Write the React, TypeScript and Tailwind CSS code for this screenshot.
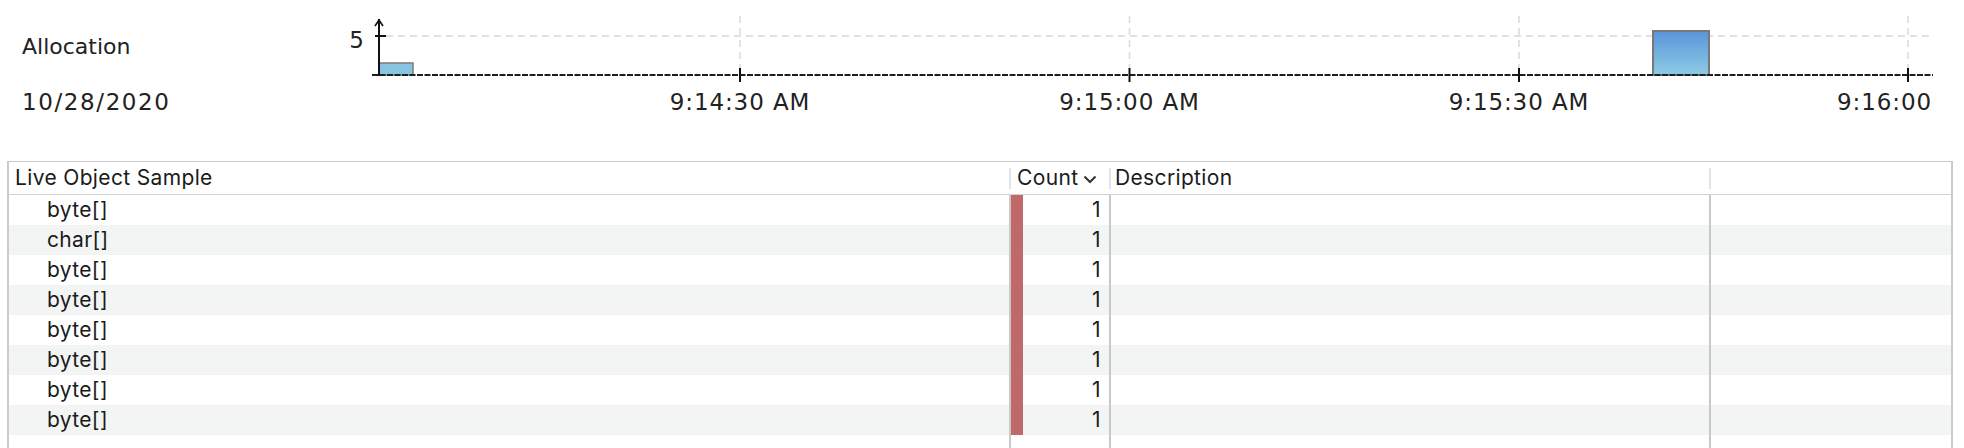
import React from 'react';

const rows = ['byte[]', 'char[]', 'byte[]', 'byte[]', 'byte[]', 'byte[]', 'byte[]', 'byte[]'];

// tick x positions inside the chart svg (svg starts at page x 340)
const ticks = [
  { x: 400, label: '9:14:30 AM' },
  { x: 789.5, label: '9:15:00 AM' },
  { x: 1179, label: '9:15:30 AM' },
  { x: 1568, label: '9:16:00' },
];

const AllocationChart: React.FC = () => {
  return (
    <svg width={1624} height={161} className="shrink-0" aria-label="Allocation chart">
      <defs>
        <linearGradient id="barFill" x1="0" y1="0" x2="0" y2="1">
          <stop offset="0" stopColor="#5a94db" />
          <stop offset="1" stopColor="#8dcbe3" />
        </linearGradient>
      </defs>

      {/* grid */}
      <line x1={46} y1={36} x2={1593} y2={36} stroke="#d9d9d9" strokeWidth={1.5} strokeDasharray="7 5" />
      {ticks.map((t) => (
        <line key={t.x} x1={t.x} y1={16} x2={t.x} y2={70} stroke="#d9d9d9" strokeWidth={1.5} strokeDasharray="7 5" />
      ))}

      {/* bars */}
      <rect x={39} y={63} width={34} height={12} fill="#86c4e1" stroke="#7b7b7b" strokeWidth={1.5} />
      <rect x={1313} y={31} width={56} height={44} fill="url(#barFill)" stroke="#787878" strokeWidth={2} />

      {/* axes */}
      <line x1={32} y1={75} x2={1593} y2={75} stroke="#1e1e1e" strokeWidth={2} strokeDasharray="6 1.5" />
      <line x1={39} y1={19} x2={39} y2={76} stroke="#111" strokeWidth={2} />
      <polyline points="35,26 39,20 43,26" fill="none" stroke="#111" strokeWidth={1.6} />
      <line x1={35} y1={36} x2={46} y2={36} stroke="#111" strokeWidth={2} />
      {ticks.map((t) => (
        <line key={'t' + t.x} x1={t.x} y1={68} x2={t.x} y2={82} stroke="#111" strokeWidth={2} />
      ))}

      {/* labels */}
      <g fontFamily="'DejaVu Sans', sans-serif" fill="#222" fontSize={23} letterSpacing={0.9}>
        <text x={24} y={48} textAnchor="end" letterSpacing={0}>5</text>
        <text x={400} y={110} textAnchor="middle">9:14:30 AM</text>
        <text x={789.5} y={110} textAnchor="middle">9:15:00 AM</text>
        <text x={1179} y={110} textAnchor="middle">9:15:30 AM</text>
        <text x={1592} y={110} textAnchor="end">9:16:00</text>
      </g>
    </svg>
  );
};

const Chevron: React.FC = () => (
  <svg width={14} height={9} viewBox="0 0 14 9" className="ml-[5px] mt-[2px]" aria-hidden="true">
    <polyline points="1.5,1.5 7,7 12.5,1.5" fill="none" stroke="#333" strokeWidth={2} />
  </svg>
);

const HeaderSep: React.FC = () => <div className="h-[21px] w-[2px] shrink-0 bg-[#e4e4e4]" />;

export default function App() {
  return (
    <div className="flex h-[448px] w-[1964px] flex-col overflow-hidden bg-white">
      {/* Allocation overview */}
      <div className="flex h-[161px] shrink-0">
        <div className="w-[340px] shrink-0 pl-[22px] pt-[34px] font-['DejaVu_Sans',sans-serif] text-[#222]">
          <div className="h-[26px] text-[22px] leading-[26px]">Allocation</div>
          <div className="mt-[29px] h-[26px] text-[23px] leading-[26px] tracking-[1.6px]">10/28/2020</div>
        </div>
        <AllocationChart />
      </div>

      {/* Live object table */}
      <div className="ml-[7px] flex w-[1946px] flex-1 flex-col border-x-2 border-t border-[#cbcbcb] font-['Inter',sans-serif] text-[21px] tracking-[0.35px] text-[#1b1b1b]">
        <div className="grid h-[33px] shrink-0 grid-cols-[1000px_100px_600px_1fr] border-b border-[#d2d2d2] bg-white">
          <div className="flex items-center pl-[6px] leading-[24px]">Live Object Sample</div>
          <div className="flex items-center">
            <HeaderSep />
            <span className="ml-[6px] leading-[24px]">Count</span>
            <Chevron />
          </div>
          <div className="flex items-center">
            <HeaderSep />
            <span className="ml-[4px] leading-[24px]">Description</span>
          </div>
          <div className="flex items-center">
            <HeaderSep />
          </div>
        </div>

        <div className="flex flex-1 flex-col">
          {rows.map((name, i) => (
            <div
              key={i}
              className={
                'grid h-[30px] shrink-0 grid-cols-[1000px_100px_600px_1fr] ' +
                (i % 2 === 1 ? 'bg-[#f3f4f4]' : 'bg-white')
              }
            >
              <div className="flex items-center pl-[38px] leading-[24px]">{name}</div>
              <div className="flex items-stretch border-l-2 border-[#c9c9c9]">
                <div className="w-[12px] bg-[#bf6a69]" />
                <div className="flex flex-1 items-center justify-end pr-[8px] leading-[24px]">1</div>
              </div>
              <div className="border-l-2 border-[#c9c9c9]" />
              <div className="border-l-2 border-[#c9c9c9]" />
            </div>
          ))}
          <div className="grid flex-1 grid-cols-[1000px_100px_600px_1fr] bg-white">
            <div />
            <div className="border-l-2 border-[#c9c9c9]" />
            <div className="border-l-2 border-[#c9c9c9]" />
            <div className="border-l-2 border-[#c9c9c9]" />
          </div>
        </div>
      </div>
    </div>
  );
}
